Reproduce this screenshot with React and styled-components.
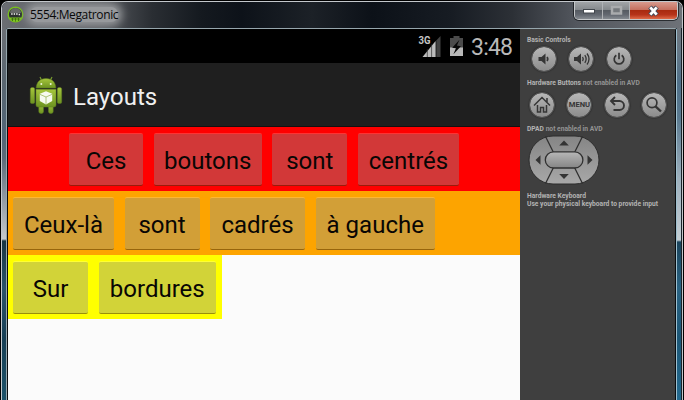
import React from 'react';
import styled, { createGlobalStyle, css } from 'styled-components';

const GlobalStyle = createGlobalStyle`
  * { box-sizing: border-box; }
  body { margin: 0; background: #000; overflow: hidden; }
`;

const Window = styled.div`
  width: 684px;
  height: 400px;
  display: flex;
  flex-direction: column;
  background: #000;
  font-family: Roboto, sans-serif;
  overflow: hidden;
`;

const Frame = styled.div`
  flex: 1;
  margin: 1px 1px 0;
  border: 1px solid #c3c7cb;
  border-bottom: 0;
  border-radius: 7px 7px 0 0;
  display: flex;
  flex-direction: column;
  overflow: hidden;
  background: #0b1015;
`;

const TitleBar = styled.header`
  height: 26px;
  display: flex;
  align-items: flex-start;
  justify-content: space-between;
  padding-left: 5px;
  background:
    linear-gradient(90deg, #6a6d72 0, #55585d 100px, #2a2e33 150px, #14191f 200px, #0d1219 240px, #1c2127 310px, #0c1118 370px, #171c23 450px, #2c3036 510px, #53575e 575px, #6e7278 680px);
`;

const TitleGroup = styled.div`
  display: flex;
  align-items: center;
  height: 25px;
  gap: 6px;
`;

const Title = styled.span`
  font: 12px/15px 'Open Sans', sans-serif;
  letter-spacing: -0.38px;
  color: #08090a;
  white-space: nowrap;
  background: #97999c;
  border-radius: 7px;
  box-shadow: 0 0 9px 4px #97999c;
`;

const Caption = styled.div`
  display: flex;
  height: 18px;
  margin-right: 4px;
  border: 1px solid #c5c8ca;
  border-top: 0;
  border-radius: 0 0 5px 5px;
  overflow: hidden;
  box-shadow: 0 0 0 1px rgba(15, 18, 22, 0.7);
`;

const CaptionButton = styled.button`
  width: ${(p) => p.$width}px;
  height: 17px;
  padding: 0;
  border: 0;
  border-right: ${(p) => (p.$close ? 0 : '1px solid #b0b3b6')};
  display: grid;
  place-items: center;
  background: ${(p) =>
    p.$close
      ? 'linear-gradient(#d79a8e 0, #c6705f 45%, #a92a10 50%, #b6331a 75%, #df6a48 100%)'
      : 'linear-gradient(#a1a4a7 0, #85898d 45%, #565b62 50%, #636870 75%, #868b91 100%)'};
`;

const Body = styled.div`
  flex: 1;
  display: flex;
`;

const Glass = styled.div`
  width: ${(p) => p.$width}px;
  ${(p) =>
    p.$right
      ? css`
          border-right: 1px solid #1c252c;
          background: linear-gradient(#71767c 0, #657887 25px, #507089 55px, #5b7a90 90px, #9eb0bd 150px, #c4ced4 212px, #1b445c 214px, #2a6383 260px, #1c5777 310px, #23698e 370px);
        `
      : css`
          background: linear-gradient(#6b6f75 0, #5a6670 50px, #516577 110px, #5b6a79 130px, #c5c9cc 211px, #183442 213px, #2a536a 260px, #173f55 310px, #1d5269 370px);
        `}
`;

const Client = styled.div`
  flex: 1;
  display: flex;
  border: 1px solid #96a6ad;
  border-bottom: 0;
  border-right-color: #9fc0cf;
  border-radius: 2px 2px 0 0;
  background: #080b0d;
  overflow: hidden;
  padding-right: 1px;
  padding-left: 1px;
`;

const Screen = styled.main`
  width: 512px;
  flex: none;
  background: #fbfbfb;
`;

const StatusBar = styled.div`
  height: 34px;
  background: #000;
  display: flex;
  justify-content: flex-end;
  align-items: center;
  gap: 7px;
  padding: 0 8px 0 0;
`;

const Clock = styled.span`
  font-size: 23px;
  line-height: 34px;
  letter-spacing: -0.8px;
  color: #b9b9b9;
  width: 41px;
  padding-top: 3px;
  white-space: nowrap;
`;

const ActionBar = styled.div`
  height: 64px;
  display: flex;
  align-items: center;
  gap: 10px;
  padding-left: 21px;
  background: #1f1f1f;
  border-bottom: 1px solid #161010;
  color: #f0f0f0;
`;

const ActionTitle = styled.h1`
  margin: 0;
  padding-top: 4px;
  font-size: 24px;
  font-weight: 400;
`;

const ButtonRow = styled.div`
  width: ${(p) => p.$width || '100%'};
  height: 64px;
  padding: 6px 5px 5px;
  display: flex;
  gap: 10.5px;
  justify-content: ${(p) => (p.$center ? 'center' : 'flex-start')};
  background: ${(p) => p.$color};
`;

const HoloButton = styled.button`
  width: ${(p) => p.$width}px;
  height: 53px;
  flex: none;
  padding: 3px 0 0;
  border: 0;
  border-top: 1px solid rgba(255, 255, 255, 0.2);
  border-bottom: 1.5px solid rgba(70, 50, 20, 0.55);
  border-radius: 2px;
  background: ${(p) => p.$fill};
  background-clip: padding-box;
  font: 24px/48px Roboto, sans-serif;
  color: #090604;
  white-space: nowrap;
`;

const Controls = styled.aside`
  flex: 1;
  min-width: 0;
  background: #3f3f3f;
  padding: 6px 0 0 7px;
`;

const Heading = styled.div`
  height: ${(p) => (p.$tight ? 8 : 10)}px;
  font-size: 6.7px;
  line-height: ${(p) => (p.$tight ? 8 : 10)}px;
  font-weight: 700;
  color: #b3b3b3;
  white-space: nowrap;
`;

const Note = styled.span`
  color: #949494;
`;

const RoundRow = styled.div`
  display: flex;
  gap: 11.4px;
  height: 26px;
  margin: ${(p) => p.$margin};
`;

const RoundButton = styled.button`
  width: 26px;
  height: 26px;
  padding: 0;
  flex: none;
  border: 1px solid #555;
  border-radius: 50%;
  background: linear-gradient(#b7b7b7, #8c8c8c);
  background-clip: padding-box;
  box-shadow: 0 0 1px 0.5px #2c2c2c;
  display: grid;
  place-items: center;
  color: #353535;
  font: 700 7.6px/24px Roboto, sans-serif;
`;

const Pad = styled.svg`
  display: block;
  margin: 1px 0 7px 1px;
`;

const AvdIcon = () => (
  <svg width="17" height="17" viewBox="0 0 17 17">
    <circle cx="8.5" cy="8.5" r="7.3" fill="#2b302e" stroke="#78bd1f" strokeWidth="1.4" />
    <path d="M3 7a5.5 5 0 0 1 11 0z" fill="#656867" />
    <path d="M2.4 11.5h12.2a6.6 6.2 0 0 1-12.2 0z" fill="#80cc22" />
    <path d="M4 13h9M5.5 12v3M8.5 12v3.5M11.5 12v3" stroke="#294812" strokeWidth=".6" />
    <path d="M4.2 8h1.4M6.7 8h1.4M9.2 8h1.4M11.7 8.6h1.2" stroke="#fff" strokeWidth="1.5" />
  </svg>
);

const SignalIcon = () => (
  <svg width="24" height="23" viewBox="0 0 24 23">
    <text x="0.5" y="9.3" fontSize="11" fontWeight="700" fontFamily="Roboto" textLength="12" lengthAdjust="spacingAndGlyphs" fill="#c6c6c6">3G</text>
    <path d="M22.5 1v21h-4.2V5.5z" fill="#424242" />
    <path d="M17.6 6v16H4.5z" fill="#bdbdbd" />
    <path d="M9.3 14v8M13.6 9.5V22" stroke="#333" strokeWidth=".7" />
  </svg>
);

const BatteryIcon = () => (
  <svg width="15" height="22" viewBox="0 0 15 22">
    <path d="M4.5 1h6v2H14v18H1V3h3.5z" fill="#4b4b4b" />
    <path d="M1 12.5h13V21H1z" fill="#b8b8b8" />
    <path d="M10.5 4.8 3.2 12.7l3.7.6-2.5 6 7.5-8-4-.8z" fill="#080808" />
  </svg>
);

const RobotIcon = () => (
  <svg width="34" height="38" viewBox="0 0 34 38">
    <defs>
      <linearGradient id="robot" x2="0" y2="1">
        <stop stopColor="#a6c63c" />
        <stop offset="1" stopColor="#6d9321" />
      </linearGradient>
    </defs>
    <path d="m11 1 2 4M23 1l-2 4" stroke="#769a30" strokeWidth="1.2" />
    <g fill="url(#robot)" stroke="#5e7c20" strokeWidth=".5">
      <rect x="1.3" y="11.5" width="4.4" height="16" rx="1.6" />
      <rect x="28.3" y="11.5" width="4.4" height="16" rx="1.6" />
      <rect x="9.8" y="27" width="4.7" height="10.5" rx="2" />
      <rect x="19.5" y="27" width="4.7" height="10.5" rx="2" />
      <path d="M7 13.3h20V29q0 2-2 2H9q-2 0-2-2z" />
      <path d="M7.2 12C7.5 6 11 2.500 17 2.500S26.5 6 26.8 12z" />
    </g>
    <circle cx="12.3" cy="8" r="1" fill="#eef6dc" />
    <circle cx="21.7" cy="8" r="1" fill="#eef6dc" />
    <path d="m17 15.2 6.2 2.6v7.2L17 28.6 10.8 25v-7.2z" fill="#f7faf0" />
    <path d="m10.800 18.300 6.200 2.700 6.200-2.700M17 21v7" fill="none" stroke="#9cb85c" strokeWidth=".8" />
  </svg>
);

const Glyph = ({ children }) => (
  <svg width="24" height="24" viewBox="0 0 24 24" fill="none" stroke="currentColor" strokeWidth="1.7">
    {children}
  </svg>
);

const speaker = 'M6.5 10h3l4-3.5v11l-4-3.5h-3z';

const DirectionPad = () => (
  <Pad width="72" height="50" viewBox="0 0 72 50">
    <defs>
      <linearGradient id="pad" x2="0" y2="1">
        <stop stopColor="#858585" />
        <stop offset="1" stopColor="#a8a8a8" />
      </linearGradient>
      <linearGradient id="center" x2="0" y2="1">
        <stop stopColor="#b8b8b8" />
        <stop offset="1" stopColor="#858585" />
      </linearGradient>
    </defs>
    <rect x="1" y="1" width="70" height="48" rx="24" fill="url(#pad)" stroke="#2d2d2d" />
    <path d="m17.5 1.5 8 16M54.5 1.5l-8 16M17.5 48.5l8-16M54.5 48.5l-8-16" stroke="#303030" strokeWidth="1.3" />
    <rect x="17.3" y="16.8" width="37.6" height="16.2" rx="8.1" fill="url(#center)" stroke="#303030" strokeWidth="1.3" />
    <path d="m36 5.5 4.8 5h-9.6zM36 44l4.8-5h-9.6zM7.5 25l5-4.8v9.6zM64.5 25l-5-4.8v9.6z" fill="#343434" />
  </Pad>
);

const rows = [
  { color: '#ff0000', fill: '#d23838', center: true, items: [['Ces', 74.5], ['boutons', 108], ['sont', 75], ['centrés', 101.5]] },
  { color: '#fda400', fill: '#d29f37', items: [['Ceux-là', 101], ['sont', 75], ['cadrés', 95], ['à gauche', 119.5]] },
  { color: '#ffff00', fill: '#d2d338', width: '213.5px', items: [['Sur', 75], ['bordures', 117.5]] },
];

export default function App() {
  return (
    <Window>
      <GlobalStyle />
      <Frame>
        <TitleBar>
          <TitleGroup>
            <AvdIcon />
            <Title>5554:Megatronic</Title>
          </TitleGroup>
          <Caption>
            <CaptionButton $width={28} aria-label="Minimize">
              <svg width="12" height="6" viewBox="0 0 12 6"><rect x=".5" y="1.5" width="11" height="3.5" fill="#fff" stroke="#42474d" /></svg>
            </CaptionButton>
            <CaptionButton $width={27} aria-label="Maximize">
              <svg width="13" height="11" viewBox="0 0 13 11"><rect x="2" y="2" width="9" height="6.5" fill="#75797d" stroke="#a9abad" strokeWidth="2.5" /></svg>
            </CaptionButton>
            <CaptionButton $width={47} $close aria-label="Close">
              <svg width="13" height="12" viewBox="0 0 13 12">
                <path d="m3 2 7 8M10 2l-7 8" stroke="#464b59" strokeWidth="4.8" />
                <path d="m3.3 2.3 6.4 7.4M9.7 2.3 3.3 9.7" stroke="#fff" strokeWidth="2.8" />
              </svg>
            </CaptionButton>
          </Caption>
        </TitleBar>
        <Body>
          <Glass $width={4} />
          <Client>
            <Screen>
              <StatusBar>
                <SignalIcon />
                <BatteryIcon />
                <Clock>3:48</Clock>
              </StatusBar>
              <ActionBar>
                <RobotIcon />
                <ActionTitle>Layouts</ActionTitle>
              </ActionBar>
              {rows.map((row) => (
                <ButtonRow key={row.color} $color={row.color} $center={row.center} $width={row.width}>
                  {row.items.map(([label, width]) => (
                    <HoloButton key={label} $width={width} $fill={row.fill}>{label}</HoloButton>
                  ))}
                </ButtonRow>
              ))}
            </Screen>
            <Controls>
              <Heading>Basic Controls</Heading>
              <RoundRow $margin="1px 0 6px 4px">
                <RoundButton aria-label="Volume down">
                  <Glyph><path d={speaker} fill="currentColor" stroke="none" /><path d="M15 10q1.5 2 0 4" /></Glyph>
                </RoundButton>
                <RoundButton aria-label="Volume up">
                  <Glyph><path d={speaker} fill="currentColor" stroke="none" transform="translate(-1.5)" /><path d="M13.5 10q1.5 2 0 4M15.8 8.2q2.7 3.8 0 7.6M18 6.5q4 5.5 0 11" strokeWidth="1.3" /></Glyph>
                </RoundButton>
                <RoundButton aria-label="Power">
                  <Glyph><path d="M9.3 8.2a4.8 4.8 0 1 0 5.4 0M12 5.8v6.5" /></Glyph>
                </RoundButton>
              </RoundRow>
              <Heading>Hardware Buttons <Note>not enabled in AVD</Note></Heading>
              <RoundRow $margin="4px 0 6px 2px">
                <RoundButton aria-label="Home">
                  <Glyph><path d="m4 12.5 8-8 8 8M7.5 12v7h3v-4.5h3V19h3v-7M17 5v4.5" strokeWidth="1.5" /></Glyph>
                </RoundButton>
                <RoundButton>MENU</RoundButton>
                <RoundButton aria-label="Back">
                  <Glyph><path d="M10 4 6 8l4 4M6.5 8h8a4.5 4.5 0 0 1 0 9H8.5" strokeWidth="1.9" /></Glyph>
                </RoundButton>
                <RoundButton aria-label="Search">
                  <Glyph><circle cx="10" cy="9.8" r="4.9" /><path d="m13.5 13.3 5.5 5.2" strokeWidth="2.4" /></Glyph>
                </RoundButton>
              </RoundRow>
              <Heading>DPAD <Note>not enabled in AVD</Note></Heading>
              <DirectionPad />
              <Heading $tight>Hardware Keyboard</Heading>
              <Heading $tight>Use your physical keyboard to provide input</Heading>
            </Controls>
          </Client>
          <Glass $width={5} $right />
        </Body>
      </Frame>
    </Window>
  );
}
